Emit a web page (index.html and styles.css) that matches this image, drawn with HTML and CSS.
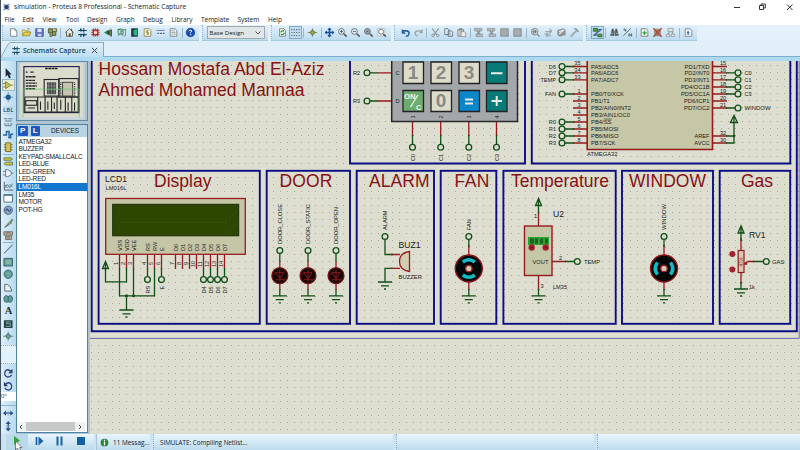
FILE: index.html
```html
<!DOCTYPE html>
<html lang="en">
<head>
<meta charset="utf-8">
<title>simulation - Proteus 8 Professional - Schematic Capture</title>
<link rel="stylesheet" href="styles.css">
</head>
<body>
<svg class="defs" aria-hidden="true">
<defs>
<symbol id="page" viewBox="0 0 12 12"><path d="M2.5 1.5h5l2.500 2.500v6.500h-7.500z" fill="#fff" stroke="#777"/><path d="M7.500 1.500v2.500h2.500" fill="none" stroke="#777" stroke-width=".7"/></symbol>
<symbol id="open" viewBox="0 0 12 12"><path d="M1 10V3h3l1 1h4v2" fill="#f4e58a" stroke="#8b8436" stroke-width=".8"/><path d="M1 10l2.300-4.500H11.500L9.500 10z" fill="#e5cc48" stroke="#8b7c26" stroke-width=".8"/><path d="M7 1.500q2-1 3 1" fill="none" stroke="#555" stroke-width=".8"/></symbol>
<symbol id="save" viewBox="0 0 12 12"><path d="M1.500 1.500h9v9h-9z" fill="#6875bb" stroke="#394891"/><path d="M3.500 1.500h5v4h-5z" fill="#dce2f5"/><path d="M4 7.500h4.500v3H4z" fill="#c6cbe5"/></symbol>
<symbol id="import" viewBox="0 0 12 12"><path d="M1 1.500h5v5H1zM6 4.500h4v5H6z" fill="#939d4a" stroke="#434d32"/><path d="M7 1.500h4v4M3 7l3 3-3 1z" fill="#d4be4a" stroke="#56513a"/></symbol>
<symbol id="home" viewBox="0 0 12 12"><path d="M1 6L6 1.500 11 6M2.500 5.500v5h7v-5M8.500 1.500v3" fill="#eef0e8" stroke="#3d4339"/><path d="M5 7h2.500v3.500H5z" fill="#7c512a"/></symbol>
<symbol id="schem" viewBox="0 0 12 12"><path d="M1 3.500h10M1 8.500h10M4 1v3.500M7.500 1v5M4 7.500v4M7.500 7.500v4" stroke="#184961" stroke-width="1.300"/><path d="M3 2.500h2.500v2H3zM6.500 7.500H9v2H6.500z" fill="#123f5c"/></symbol>
<symbol id="pcb" viewBox="0 0 12 12"><path d="M1 3.500h10M1 6h10M1 8.500h10M3.500 1v10M6 1v10M8.500 1v10" stroke="#a43131"/><path d="M2.500 2.500h7v7h-7z" fill="#ba2a26"/><circle cx="6" cy="6" r="2" fill="#f5ddd3"/></symbol>
<symbol id="view3d" viewBox="0 0 12 12"><path d="M.5 6l5-3v6z" fill="#278e38"/><path d="M5 4l5-2v9L5 8z" fill="#2f4043"/><path d="M8 1v10" stroke="#7eae4b"/></symbol>
<symbol id="gerber" viewBox="0 0 12 12"><path d="M1 3q3-3 8 0l2-1v7l-2 2M2 10l3-4 3 4M2 2v6h6V4z" fill="none" stroke="#3c7d56"/><path d="M4 4h5v2H4z" fill="#79a58b"/></symbol>
<symbol id="explorer" viewBox="0 0 12 12"><path d="M2 1h8v10H2z" fill="#203d3a"/><path d="M5 3l4-1v8L5 9z" fill="#26b78b"/></symbol>
<symbol id="bom" viewBox="0 0 12 12"><path d="M2 1.500h6l2 2v7H2z" fill="#fafae4" stroke="#827d54"/><path d="M7.500 4h-3v2h3v2h-3M6 3v6" fill="none" stroke="#8d7d24" stroke-width=".8"/></symbol>
<symbol id="code" viewBox="0 0 12 12"><path d="M1 2h10v8H1z" fill="#dfeafa"/><path d="M1 3.500h10" stroke="#4d6da7"/><path d="M2 7h2m1 0h3m1 0h2" stroke="#4060b0" stroke-width="1.500"/></symbol>
<symbol id="note" viewBox="0 0 12 12"><path d="M2 1.500h6l2 2v7H2z" fill="#eef1f1" stroke="#718087"/><path d="M3.500 4h4M3.500 6h5M3.500 8h5" stroke="#7d8d94" stroke-width=".8"/></symbol>
<symbol id="help" viewBox="0 0 12 12"><circle cx="6" cy="6" r="5.300" fill="#194eaf" stroke="#12377b" stroke-width=".6"/><path d="M4 4.500Q4.500 2.700 6.500 3 9 3.700 6.200 6v1" fill="none" stroke="#fff" stroke-width="1.200"/><path d="M5.600 8.200H7v1.200H5.600z" fill="#fff"/></symbol>
<symbol id="redraw" viewBox="0 0 12 12"><path d="M2.500 1.500h5l2 2v7h-7z" fill="#fff" stroke="#777"/><path d="M4 6q0-2 3-2M8 6q0 2.500-3 2.500" fill="none" stroke="#319438" stroke-width="1.300"/><path d="M6.500 2.500L8.500 4l-2 1.500zM5.500 7v3L3.500 8.500z" fill="#319438"/></symbol>
<symbol id="grid" viewBox="0 0 12 12"><path d="M1 2.500h10M1 6h10M1 9.500h10" stroke="#52636e" stroke-width="1.300" stroke-dasharray="1.300 1.600"/></symbol>
<symbol id="origin" viewBox="0 0 12 12"><path d="M0 6h12M6 1v10" stroke="#7b8067"/><path d="M6 2.800L9.200 6 6 9.200 2.800 6z" fill="#a1a146" stroke="#4f5736"/></symbol>
<symbol id="pan" viewBox="0 0 12 12"><path d="M1 6h10M6 1v10" stroke="#175295" stroke-width="2"/><path d="M0 6l3-2.500v5zM12 6L9 3.500v5zM6 0l2.500 3h-5zM6 12L3.500 9h5z" fill="#175295"/></symbol>
<symbol id="zoomin" viewBox="0 0 12 12"><circle cx="4.700" cy="4.700" r="3.500" fill="#e5eef4" stroke="#596168"/><path d="M7.500 7.500l3.500 3.500" stroke="#605746" stroke-width="1.900"/><path d="M3 4.700h3.500M4.700 3v3.500" stroke="#405060"/></symbol>
<symbol id="zoomout" viewBox="0 0 12 12"><circle cx="4.700" cy="4.700" r="3.500" fill="#e5eef4" stroke="#596168"/><path d="M7.500 7.500l3.500 3.500" stroke="#605746" stroke-width="1.900"/><path d="M3 4.700h3.500" stroke="#405060"/></symbol>
<symbol id="zoomall" viewBox="0 0 12 12"><circle cx="4.700" cy="4.700" r="3.500" fill="#a7b3bb" stroke="#596168"/><path d="M7.500 7.500l3.500 3.500" stroke="#605746" stroke-width="1.900"/><path d="M3.500 3.500h2.500v2.500H3.500z" fill="#556472"/></symbol>
<symbol id="zoomarea" viewBox="0 0 12 12"><path d="M1 1h9v9H1z" fill="#f4f6f7" stroke="#a3aaa8" stroke-width=".7"/><circle cx="5.500" cy="5" r="3" fill="#fff" stroke="#596168"/><path d="M8 8l3.500 3" stroke="#605746" stroke-width="1.900"/></symbol>
<symbol id="undo" viewBox="0 0 12 12"><path d="M3 4h4q4 0 3 4-.8 2.500-3.500 2.500" fill="none" stroke="#2264a1" stroke-width="2"/><path d="M1.500 1.500v6h5z" fill="#2264a1"/></symbol>
<symbol id="redo" viewBox="0 0 12 12"><path d="M9 4H6Q1.500 4 2 7.500 2.700 10 5 10" fill="none" stroke="#9aa1a3" stroke-width="1.700"/><path d="M11 1.500v5.500H6.500z" fill="#9aa1a3"/></symbol>
<symbol id="cut" viewBox="0 0 12 12"><path d="M2 1l5.500 8M10 1L4 9" stroke="#969a9c" stroke-width="1.500"/><circle cx="3" cy="9.500" r="1.500" fill="none" stroke="#8a8e90"/><circle cx="8.700" cy="9.500" r="1.500" fill="none" stroke="#8a8e90"/></symbol>
<symbol id="copy" viewBox="0 0 12 12"><path d="M1.500 1.500h4l1 1v6h-5zM5.500 4h4l1.500 1.500v5H5.500z" fill="#e9eff3" stroke="#556b7a"/><path d="M7 7h2.500M7 9h2.500" stroke="#556b7a" stroke-width=".6"/></symbol>
<symbol id="paste" viewBox="0 0 12 12"><path d="M1.500 2.500h7v8h-7z" fill="#c6c8c8" stroke="#8a8d8e"/><path d="M3 1h4v2.500H3z" fill="#898c8d"/><path d="M5.500 5h4l1.500 1.500v4.500H5.500z" fill="#efefef" stroke="#8a8d8e"/></symbol>
<symbol id="blockcopy" viewBox="0 0 12 12"><path d="M1 1h9v3H1zM3 8h8v3H3z" fill="#b6bbbd" stroke="#858c8f" stroke-width=".8"/><path d="M4 4l4 4M8 4L4 8" stroke="#858c8f" stroke-width="1.500"/></symbol>
<symbol id="blockfill" viewBox="0 0 12 12"><path d="M1.500 1.500h9v9h-9z" fill="#9fa5a7" stroke="#81888b"/><path d="M2 4h8M2 7h8M4 2v8M7 2v8" stroke="#b4bbbd" stroke-width=".6"/></symbol>
<symbol id="pick" viewBox="0 0 12 12"><circle cx="5" cy="5" r="4" fill="#dde1e2" stroke="#7d8283"/><path d="M8 8l3 3M2 5h6M4 2v6M6 3v4" stroke="#777d7e" stroke-width="1.300"/></symbol>
<symbol id="make" viewBox="0 0 12 12"><path d="M1 8h6l3-5M2 5h8M3 10h6M8 1v6M4 6v5" fill="none" stroke="#979e9f" stroke-width="1.200"/></symbol>
<symbol id="pack" viewBox="0 0 12 12"><path d="M1 3l7-2 3 2v6l-7 2-3-2z" fill="#8d9496"/><path d="M3 5l5-2M3 8l6-5" stroke="#e7eaec" stroke-width="1.300"/></symbol>
<symbol id="hammer" viewBox="0 0 12 12"><path d="M1.500 11L8 4" stroke="#a0a6a7" stroke-width="2"/><path d="M4 1h4l3.500 3.500L10 6 7.500 3z" fill="#8d9394"/></symbol>
<symbol id="autoroute" viewBox="0 0 12 12"><path d="M1 1h5v3.500H1zM6.500 8h5v3.500h-5z" fill="#4fa04a" stroke="#27662d"/><path d="M7 2.500h3L2 9h4" fill="none" stroke="#3c5c93" stroke-width="1.500"/></symbol>
<symbol id="binoc" viewBox="0 0 12 12"><path d="M3 1.500h2l.8 8.500H.8zM7 1.500h2l2.200 8.500H6.200z" fill="#52585b"/><path d="M4.500 4h3v3h-3z" fill="#777d80"/><path d="M2 7h2M8 7h2" stroke="#d5dbdf"/></symbol>
<symbol id="props" viewBox="0 0 12 12"><path d="M1 10L10 1M1 3h4M7 9h4M2 1l2 4M8 7v4M11 7v4" stroke="#576b75" stroke-width="1.200"/></symbol>
<symbol id="newsheet" viewBox="0 0 12 12"><path d="M2 1.500h6l2 2v7H2z" fill="#f4f8f0" stroke="#68766d"/><path d="M3.500 6.500h5M6 4v5" stroke="#2e9d32" stroke-width="1.500"/></symbol>
<symbol id="delsheet" viewBox="0 0 12 12"><path d="M2 1.500h8v9H2z" fill="#9b8b81"/><path d="M1 1l10 10M11 1L1 11" stroke="#b1513a" stroke-width="1.800"/></symbol>
<symbol id="goto" viewBox="0 0 12 12"><path d="M3 1h6v4H3zM1 8h4v3H1zM7 8h4v3H7z" fill="#e2e5e6" stroke="#92999c"/><path d="M5 5L3 8M8 5l1 3" stroke="#7d878b"/></symbol>
<symbol id="exit" viewBox="0 0 12 12"><path d="M2 1.500h6l2 2v7H2z" fill="#f4f8fb" stroke="#6f7d86"/><path d="M4 6h3M5.500 4v5" stroke="#3a74ad" stroke-width="1.500"/></symbol>
<symbol id="cursor" viewBox="0 0 12 12"><path d="M3 0v10l2.300-2L7 12l2-1-1.700-3.500H10z" fill="#1d2a38"/></symbol>
<symbol id="comp" viewBox="0 0 12 12"><path d="M3 2l6 4-6 4z" fill="#d2c552" stroke="#7c782c"/><path d="M0 4h3M0 8h3M9 6h3" stroke="#7c782c"/></symbol>
<symbol id="dot" viewBox="0 0 12 12"><path d="M0 6h12M6 0v12" stroke="#6f94ad"/><circle cx="6" cy="6" r="3" fill="#1f5a91"/></symbol>
<symbol id="lbl" viewBox="0 0 12 12"><path d="M0 2.500h12M0 10h12" stroke="#8fb5cd" stroke-width=".6"/><text x="0" y="8.500" font-size="6.500" font-weight="bold" textLength="12" lengthAdjust="spacingAndGlyphs" fill="#30688f">LBL</text></symbol>
<symbol id="script" viewBox="0 0 12 12"><path d="M1 2h4m1 0h5M2 4.500h8M1 8h3m1 0h2m1 0h3M2 10h8" stroke="#657c8c" stroke-width="1.200"/></symbol>
<symbol id="bus" viewBox="0 0 12 12"><path d="M0 7h4V3h3v7h2V6h3" fill="none" stroke="#2a67a0" stroke-width="1.700"/></symbol>
<symbol id="sub" viewBox="0 0 12 12"><path d="M3 1h6v10H3z" fill="#d4c24a" stroke="#6f6a2b"/><path d="M1 3h2M1 6h2M1 9h2M9 3h2M9 6h2M9 9h2" stroke="#6f6a2b"/></symbol>
<symbol id="term" viewBox="0 0 12 12"><path d="M1 2h8l2 1.500L9 5H1zM3 7h8v3.500H3L1 9z" fill="#c8c04a" stroke="#4c6d48" stroke-width=".8"/></symbol>
<symbol id="gate" viewBox="0 0 12 12"><path d="M3 2h2q5 1 5 4 0 3-5 4H3z" fill="#eef4f8" stroke="#5d707c"/><path d="M0 4h3M0 8h3M10 6h2" stroke="#5d707c"/></symbol>
<symbol id="graph" viewBox="0 0 12 12"><path d="M1.500 1v9.500H12" fill="none" stroke="#547"/><path d="M2 8l3-4 3 4 3-5" fill="none" stroke="#328377"/><path d="M2 4l3 4 3-4 3 3" fill="none" stroke="#7e8790"/></symbol>
<symbol id="window" viewBox="0 0 12 12"><path d="M1 2h10v8.500H1z" fill="#fff" stroke="#456781"/><path d="M1 2.500h10" stroke="#456781" stroke-width="1.500"/></symbol>
<symbol id="gen" viewBox="0 0 12 12"><circle cx="6" cy="6" r="4.800" fill="#8aa5bc" stroke="#455b78"/><path d="M3 7q1.500-4 3-1t3-1" fill="none" stroke="#294585" stroke-width="1.200"/></symbol>
<symbol id="probe" viewBox="0 0 12 12"><path d="M2 11L8 4l2 1.500z" fill="#bfbd74" stroke="#566"/><path d="M8 4l2-3 2 1-2 3.500" fill="#7a886b"/></symbol>
<symbol id="meter" viewBox="0 0 12 12"><path d="M1 2h10v4H1zM3 7h7v4H3z" fill="#b7b6a7" stroke="#616862"/><path d="M3 4l3-1 3 1M4 9h4" stroke="#87533f" fill="none"/></symbol>
<symbol id="line" viewBox="0 0 12 12"><path d="M1 11L11 1" stroke="#263a4b"/></symbol>
<symbol id="rect" viewBox="0 0 12 12"><path d="M1 1.500h10v9H1z" fill="#5f9a99" stroke="#32616c"/><path d="M3 3.500h6v5H3z" fill="#85b7a5"/></symbol>
<symbol id="circle" viewBox="0 0 12 12"><circle cx="6" cy="6" r="4.800" fill="#5e9d95" stroke="#32616c"/><path d="M3 5h6M4 8h4" stroke="#89b8a8"/></symbol>
<symbol id="arc" viewBox="0 0 12 12"><path d="M2 2.500q7 0 8 8H2z" fill="#e9f1f4" stroke="#465c6b"/></symbol>
<symbol id="path" viewBox="0 0 12 12"><path d="M6 3Q2 0 1 5q0 6 5 4 5 2 5-4-1-5-5-2z" fill="#5e9d95" stroke="#32616c"/><path d="M6 3v6" stroke="#32616c"/></symbol>
<symbol id="sym" viewBox="0 0 12 12"><path d="M1 1.500h10v9H1z" fill="#274648"/><path d="M9 3.500H4v2h4.500v3H3" fill="none" stroke="#87afa9"/></symbol>
<symbol id="mark" viewBox="0 0 12 12"><path d="M0 6h12M6 1v10" stroke="#537a7b"/><circle cx="6" cy="6" r="2.500" fill="#78a396" stroke="#3d6767"/></symbol>
<symbol id="rot" viewBox="0 0 12 12"><path d="M9.500 4Q5 0 2.500 4q-2 5 3 6.500 3 0 4.500-2.500" fill="none" stroke="#273f76" stroke-width="1.500"/><path d="M11 1v5H6z" fill="#273f76"/></symbol>
<symbol id="fliph" viewBox="0 0 12 12"><path d="M0 6l3.500-3v6zM12 6L8.500 3v6z" fill="#2a4d91"/><path d="M2 6h8" stroke="#2a4d91" stroke-width="1.500"/><path d="M6 3v6" stroke="#8aa4c5"/></symbol>

<g id="gnd"><path class="wire" d="M-7 0H7M-4 3.800H4M-1 7H1"/></g>
<g id="vcc"><path class="wire" d="M0 0V6M0-1L-3 6H3zM0 2V6"/></g>
<g id="led"><path class="pin" d="M0-14V14"/><circle r="8" fill="#160606" stroke="#7d1718" stroke-width="1.200"/><path d="M-4-3H4L0 3zM-4 4H4M-6-1l3-3M3 5l3-2M0-6V6" fill="none" stroke="#84191b"/></g>
<g id="motor"><circle r="13.500" fill="#050809" stroke="#8a1518" stroke-width="1.400"/><path d="M-6-6.500Q0-11 6-6.500M-6 6.500Q0 11 6 6.500" fill="none" stroke="#17b9c4" stroke-width="3.600"/><circle r="3.200" fill="#d6c9b5" stroke="#a02726" stroke-width="1.300"/></g>
</defs>
</svg>

<div class="app">
  <header class="titlebar">
    <svg class="logo" viewBox="0 0 12 12"><rect width="12" height="12" fill="#dce3ee"/><circle cx="6" cy="6" r="4" fill="#24427d"/><path d="M1 2h3M8 2h3M1 10h3M8 10h3" stroke="#495a79"/></svg>
    <span class="title">simulation - Proteus 8 Professional - Schematic Capture</span>
    <svg class="winctl" viewBox="0 0 70 12"><path d="M5 6.500h6M30.500 4.500h4v4h-4zM32 4.500V3h4.300v4H35M58 3.500l5.500 5.500M63.500 3.500L58 9" fill="none" stroke="#333" stroke-width="1"/></svg>
  </header>
  <nav class="menu"><span>File</span><span>Edit</span><span>View</span><span>Tool</span><span>Design</span><span>Graph</span><span>Debug</span><span>Library</span><span>Template</span><span>System</span><span>Help</span></nav>

  <div class="toolbars">
    <div class="group g1"><svg><use href="#page"/></svg><svg><use href="#open"/></svg><svg><use href="#save"/></svg><svg><use href="#import"/></svg><i></i><svg><use href="#home"/></svg><svg><use href="#schem"/></svg><svg><use href="#pcb"/></svg><svg><use href="#view3d"/></svg><svg><use href="#gerber"/></svg><svg><use href="#explorer"/></svg><svg><use href="#bom"/></svg><svg><use href="#code"/></svg><svg><use href="#note"/></svg><i></i><svg><use href="#help"/></svg></div>
    <div class="group g2"><div class="combo"><span>Base Design</span><svg viewBox="0 0 6 4"><path d="M.5.500L3 3 5.500.5" fill="none" stroke="#555"/></svg></div></div>
    <div class="group g3"><svg><use href="#redraw"/></svg><svg class="on"><use href="#grid"/></svg><i></i><svg><use href="#origin"/></svg><i></i><svg><use href="#pan"/></svg><svg><use href="#zoomin"/></svg><svg><use href="#zoomout"/></svg><svg><use href="#zoomall"/></svg><svg><use href="#zoomarea"/></svg></div>
    <div class="group g4"><svg><use href="#undo"/></svg><svg><use href="#redo"/></svg><i></i><svg><use href="#cut"/></svg><svg><use href="#copy"/></svg><svg><use href="#paste"/></svg><i></i><svg><use href="#blockcopy"/></svg><svg><use href="#blockcopy"/></svg><svg><use href="#blockfill"/></svg><svg><use href="#blockfill"/></svg><i></i><svg><use href="#pick"/></svg><svg><use href="#make"/></svg><svg><use href="#pack"/></svg><svg><use href="#hammer"/></svg></div>
    <div class="group g5"><svg class="on"><use href="#autoroute"/></svg><i></i><svg><use href="#binoc"/></svg><svg><use href="#props"/></svg><i></i><svg><use href="#newsheet"/></svg><svg><use href="#delsheet"/></svg><svg><use href="#goto"/></svg><i></i><svg><use href="#exit"/></svg></div>
  </div>

  <div class="tabs">
    <svg class="tabslope" viewBox="0 0 11 15" preserveAspectRatio="none"><path d="M0 15L8 2Q9 .5 11 .5V15z" fill="#cfe6f5"/><path d="M0 15L8 2Q9 .5 11 .5" fill="none" stroke="#83a9c2"/></svg>
    <div class="tab"><svg class="tabicon"><use href="#schem"/></svg><span>Schematic Capture</span><svg class="close" viewBox="0 0 8 8"><path d="M1 1l6 6M7 1L1 7" stroke="#3c4650" stroke-width="1.100"/></svg></div>
  </div>

  <main class="work">
    <aside class="tools">
      <svg><use href="#cursor"/></svg><svg class="on"><use href="#comp"/></svg><svg><use href="#dot"/></svg><svg><use href="#lbl"/></svg><svg><use href="#script"/></svg><svg><use href="#bus"/></svg><svg><use href="#sub"/></svg><hr><svg><use href="#term"/></svg><svg><use href="#gate"/></svg><svg><use href="#graph"/></svg><svg><use href="#window"/></svg><svg><use href="#gen"/></svg><svg><use href="#probe"/></svg><svg><use href="#meter"/></svg><hr><svg><use href="#line"/></svg><svg><use href="#rect"/></svg><svg><use href="#circle"/></svg><svg><use href="#arc"/></svg><svg><use href="#path"/></svg><b>A</b><svg><use href="#sym"/></svg><svg><use href="#mark"/></svg>
      <div class="toolgap"></div>
      <svg><use href="#rot"/></svg><svg class="ccw"><use href="#rot"/></svg><div class="angle">0°</div><hr class="wide"><svg><use href="#fliph"/></svg><svg class="vert"><use href="#fliph"/></svg>
    </aside>

    <section class="side">
      <svg class="overview" viewBox="0 0 71 63">
        <rect width="71" height="63" fill="#c5d4dc"/><rect x="1" y="1.500" width="68" height="58.500" fill="#dcdccd"/>
        <rect x="5" y="5" width="60" height="50" fill="none" stroke="#191953" stroke-width="1.200"/>
        <g fill="none" stroke="#24262a" stroke-width="1.200"><path d="M6 38h58M6 54.500h58M6 38v17M20 38v17M28 38v17M35 38v17M41 38v17M50 38v17M57 38v17M64 38v17"/><rect x="27" y="19" width="16" height="18"/><rect x="43" y="18" width="21" height="20"/><rect x="7" y="42" width="12" height="5"/><path d="M9 50h8M23 43v9M31 43v9M38 44v7M45 41v11M53 44v9M60 44v9"/></g>
        <rect x="30" y="22" width="10" height="13" fill="#4b4e50"/><path d="M32 22v13M35 22v13M38 22v13M30 26h10M30 30h10" stroke="#9ba09b" stroke-width=".6"/><rect x="47" y="22" width="11" height="15" fill="#c5c5af" stroke="#333"/><path d="M45 22v15M60 22v15" stroke="#333" stroke-width="1.500" stroke-dasharray="1 1"/>
        <path d="M28 7h14M7 11h2m3 0h4M7 16h11M7 20h10M7 23h12M7 26h12M7 29h10" stroke="#222" stroke-width="1.500" stroke-dasharray="3 .5"/>
        <path d="M4 29.500h61M4 60V29.500M65 60V29.500" fill="none" stroke="#65c66e" stroke-width=".8"/>
      </svg>
      <div class="devices">
        <div class="devhead"><b>P</b><b>L</b><span>DEVICES</span></div>
        <ul><li>ATMEGA32</li><li>BUZZER</li><li>KEYPAD-SMALLCALC</li><li>LED-BLUE</li><li>LED-GREEN</li><li>LED-RED</li><li class="sel">LM016L</li><li>LM35</li><li>MOTOR</li><li>POT-HG</li></ul>
        <div class="scroll"><svg viewBox="0 0 4 6"><path d="M3 1L1 3l2 2" fill="none" stroke="#444"/></svg><div></div><svg viewBox="0 0 4 6"><path d="M1 1l2 2-2 2" fill="none" stroke="#444"/></svg></div>
      </div>
    </section>

    <svg class="canvas" viewBox="90 61 710 373">
      <defs><pattern id="dots" x="105" y="65" width="7" height="7" patternUnits="userSpaceOnUse"><rect width="1" height="1" fill="#a6a897"/></pattern></defs>
      <rect x="90" y="61" width="710" height="373" fill="#dddecf"/>
      <rect x="90" y="61" width="710" height="373" fill="url(#dots)"/>
      <g fill="none" stroke="#0d0d83" stroke-width="1.900">
        <path d="M91.700 61V331.200H796.800V61"/>
        <path d="M350 61V163.500H525V61M531.800 61V163.500H790.300V61"/>
        <rect x="98.600" y="170.800" width="161.200" height="153"/><rect x="266.700" y="170.800" width="83.300" height="153"/><rect x="356.700" y="170.800" width="77.300" height="153"/><rect x="440.700" y="170.800" width="55.600" height="153"/><rect x="503.400" y="170.800" width="112.300" height="153"/><rect x="622" y="170.800" width="91" height="153"/><rect x="719.700" y="170.800" width="70.500" height="153"/>
      </g>
      <path d="M90 338.400H799.200V61" fill="none" stroke="#6d6daf" stroke-width="1"/>

      <g class="names"><text x="98.500" y="75" textLength="226">Hossam Mostafa Abd El-Aziz</text><text x="98.500" y="95.500" textLength="206">Ahmed Mohamed Mannaa</text>
      <text x="154" y="187" textLength="57.500">Display</text><text x="279.500" y="187" textLength="53">DOOR</text><text x="369" y="187" textLength="60.500">ALARM</text><text x="454.500" y="187" textLength="35">FAN</text><text x="511" y="187" textLength="98">Temperature</text><text x="629" y="187" textLength="77">WINDOW</text><text x="741" y="187" textLength="32">Gas</text></g>

      <!-- keypad -->
      <path d="M391.700 61H517.500V121.500H391.700z" fill="#a3a7a9"/><path d="M391.700 61V121.500H517.500V61" fill="none" stroke="#27292c" stroke-width="1.500"/>
      <g stroke="#222" stroke-width="1.300"><path d="M403 62h20.500v21.500H403zM431 62h20.500v21.500H431zM459 62h20.500v21.500H459zM431 90.500h20.500v21H431z" fill="#dddccb"/><path d="M486.500 62H507v21.500h-20.500zM486.500 90.500H507v21h-20.500z" fill="#087b79"/><path d="M403 90.500h20.500v21H403z" fill="#6dac70"/><path d="M459 90.500h20.500v21H459z" fill="#0a87cb"/></g>
      <g class="keys"><text x="413" y="78.500">1</text><text x="441" y="78.500">2</text><text x="469" y="78.500">3</text><text x="441" y="106.500">0</text></g>
      <path d="M491 73.200h11.500M491.500 101h10.500M496.700 96v10M465 99.500h8M465 103.500h8" stroke="#ebece4" stroke-width="2"/>
      <path d="M410.500 107L418 95" stroke="#f4f4e8" stroke-width="1.300"/><text class="on-c" x="404" y="99" textLength="11.500" lengthAdjust="spacingAndGlyphs">ON</text><text class="on-c" x="416" y="110">C</text>
      <path class="pin" d="M378 72.800H391M378 101H391M412.500 122v14M440.700 122v14M468.800 122v14M496.500 122v14"/>
      <path class="wire" d="M370 72.800H378M370 101H378M412.500 135v9M440.700 135v9M468.800 135v9M496.500 135v9"/>
      <g class="term"><circle cx="367" cy="72.800" r="2.900"/><circle cx="367" cy="101" r="2.900"/><circle cx="412.500" cy="147.300" r="2.900"/><circle cx="440.700" cy="147.300" r="2.900"/><circle cx="468.800" cy="147.300" r="2.900"/><circle cx="496.500" cy="147.300" r="2.900"/></g>
      <g class="lab"><text x="353" y="75">R2</text><text x="353" y="103.200">R3</text><text x="395.500" y="75">C</text><text x="395.500" y="103.200">D</text>
      <text transform="translate(414.500 118.500) rotate(-90)">1</text><text transform="translate(442.700 118.500) rotate(-90)">2</text><text transform="translate(470.700 118.500) rotate(-90)">3</text><text transform="translate(498.500 118.500) rotate(-90)">4</text>
      <text transform="translate(414.800 161) rotate(-90)">C0</text><text transform="translate(442.900 161) rotate(-90)">C1</text><text transform="translate(471 161) rotate(-90)">C2</text><text transform="translate(498.900 161) rotate(-90)">C3</text></g>

      <!-- microcontroller -->
      <path d="M587.200 61H712.500V149.500H587.200z" fill="#c6c7a6"/><path d="M587.200 61V149.500H712.500V61" fill="none" stroke="#951a1d" stroke-width="1.600"/>
      <path class="pin" d="M573 66.500H587M573 72.800H587M573 79.800H587M573 94H587M573 101H587M573 108H587M573 115H587M573 122H587M573 129H587M573 136H587M573 143H587M713 66.500H727M713 72.800H727M713 79.800H727M713 87H727M713 94H727M713 101H727M713 108H727M713 136H727M713 143H727"/>
      <path class="wire" d="M565 66.500H574M565 72.800H574M565 79.800H574M565 94H574M565 122H574M565 129H574M565 136H574M565 143H574M726 72.800H735M726 79.800H735M726 87H735M726 94H735M726 108H735M726 136H734M726 143H734V116M730.500 122.500L734 115.500 737.500 122.500z"/><circle cx="734" cy="136" r="1.300" fill="#114f18"/>
      <g class="term"><circle cx="562" cy="66.500" r="2.900"/><circle cx="562" cy="72.800" r="2.900"/><circle cx="562" cy="79.800" r="2.900"/><circle cx="562" cy="94" r="2.900"/><circle cx="562" cy="122" r="2.900"/><circle cx="562" cy="129" r="2.900"/><circle cx="562" cy="136" r="2.900"/><circle cx="562" cy="143" r="2.900"/><circle cx="738" cy="72.800" r="2.900"/><circle cx="738" cy="79.800" r="2.900"/><circle cx="738" cy="87" r="2.900"/><circle cx="738" cy="94" r="2.900"/><circle cx="738" cy="108" r="2.900"/></g>
      <g class="lab end"><text x="556" y="68.500">D6</text><text x="556" y="75.200">D7</text><text x="556" y="82.200">TEMP</text><text x="556" y="96.400">FAN</text><text x="556" y="124.400">R0</text><text x="556" y="131.400">R1</text><text x="556" y="138.400">R2</text><text x="556" y="145.400">R3</text>
      <text x="580.500" y="65">35</text><text x="580.500" y="71.500">34</text><text x="580.500" y="78.500">33</text><text x="580.500" y="92.500">1</text><text x="580.500" y="99.500">2</text><text x="580.500" y="106.500">3</text><text x="580.500" y="113.500">4</text><text x="580.500" y="120.500">5</text><text x="580.500" y="127.500">6</text><text x="580.500" y="134.500">7</text><text x="580.500" y="141.500">8</text>
      <text x="709.500" y="68.700" textLength="25" lengthAdjust="spacingAndGlyphs">PD1/TXD</text><text x="709.500" y="75" textLength="25" lengthAdjust="spacingAndGlyphs">PD2/INT0</text><text x="709.500" y="82" textLength="25" lengthAdjust="spacingAndGlyphs">PD3/INT1</text><text x="709.500" y="89.200" textLength="28.500" lengthAdjust="spacingAndGlyphs">PD4/OC1B</text><text x="709.500" y="96.200" textLength="28.500" lengthAdjust="spacingAndGlyphs">PD5/OC1A</text><text x="709.500" y="103.200" textLength="25.500" lengthAdjust="spacingAndGlyphs">PD6/ICP1</text><text x="709.500" y="110.200" textLength="25.500" lengthAdjust="spacingAndGlyphs">PD7/OC2</text><text x="709.500" y="138.200">AREF</text><text x="709.500" y="145.200">AVCC</text></g>
      <g class="lab"><text x="591" y="68.700" textLength="27.500" lengthAdjust="spacingAndGlyphs">PA5/ADC5</text><text x="591" y="75" textLength="27.500" lengthAdjust="spacingAndGlyphs">PA6/ADC6</text><text x="591" y="82" textLength="27.500" lengthAdjust="spacingAndGlyphs">PA7/ADC7</text><text x="591" y="96.200" textLength="33" lengthAdjust="spacingAndGlyphs">PB0/T0/XCK</text><text x="591" y="103.200">PB1/T1</text><text x="591" y="110.200" textLength="40" lengthAdjust="spacingAndGlyphs">PB2/AIN0/INT2</text><text x="591" y="117.200" textLength="39" lengthAdjust="spacingAndGlyphs">PB3/AIN1/OC0</text><text x="591" y="124.200" textLength="20.500" lengthAdjust="spacingAndGlyphs">PB4/SS</text><text x="591" y="131.200" textLength="27.500" lengthAdjust="spacingAndGlyphs">PB5/MOSI</text><text x="591" y="138.200" textLength="27.500" lengthAdjust="spacingAndGlyphs">PB6/MISO</text><text x="591" y="145.200" textLength="24.500" lengthAdjust="spacingAndGlyphs">PB7/SCK</text><text x="587" y="156" textLength="30.500" lengthAdjust="spacingAndGlyphs">ATMEGA32</text>
      <text x="720" y="65">15</text><text x="720" y="71.500">16</text><text x="720" y="78.500">17</text><text x="720" y="85.700">18</text><text x="720" y="92.700">19</text><text x="720" y="99.700">20</text><text x="720" y="106.700">21</text><text x="720" y="134.700">32</text><text x="720" y="141.700">30</text><text x="744.500" y="75">C0</text><text x="744.500" y="82">C1</text><text x="744.500" y="89.200">C2</text><text x="744.500" y="96.200">C3</text><text x="744.500" y="110.200" textLength="26" lengthAdjust="spacingAndGlyphs">WINDOW</text></g>
      <path d="M604 119h7.500" stroke="#333" stroke-width=".6"/>

      <!-- LCD -->
      <rect x="105.700" y="198.500" width="139.600" height="55.800" fill="#c5c6a5" stroke="#9b1c20" stroke-width="1.300"/><rect x="112.700" y="204.300" width="126" height="31.500" fill="#2d4700" stroke="#172b0b" stroke-width="1"/><path d="M117 222.500H227M226 220l12-9M226 232l12-8" stroke="#48631a" stroke-width=".8" stroke-dasharray="1 3"/>
      <text class="ref" x="105" y="181.500" textLength="22" lengthAdjust="spacingAndGlyphs">LCD1</text><text class="lab" x="105.500" y="190" textLength="21" lengthAdjust="spacingAndGlyphs">LM016L</text>
      <path class="pin" d="M119.500 255v14M126.500 255v14M133.500 255v14M147.500 255v14M154.500 255v14M161.500 255v14M175.500 255v14M182.500 255v14M189.500 255v14M196.500 255v14M203.500 255v14M210.500 255v14M217.500 255v14M224.500 255v14"/>
      <path class="wire" d="M119.500 268V295.800H154.500V268M133.500 268V295.800M126.500 268V281.800H105.500V267M126.500 295.800V310M147.500 268v8M161.500 268v8M203.500 268v8M210.500 268v8M217.500 268v8M224.500 268v8"/>
      <circle cx="126.500" cy="295.800" r="1.500" fill="#114f18"/><circle cx="133.500" cy="295.800" r="1.500" fill="#114f18"/>
      <use href="#vcc" x="105.500" y="262.500"/><use href="#gnd" x="126.500" y="310"/>
      <g class="term"><circle cx="147.500" cy="279.600" r="2.900"/><circle cx="161.500" cy="279.600" r="2.900"/><circle cx="203.500" cy="279.600" r="2.900"/><circle cx="210.500" cy="279.600" r="2.900"/><circle cx="217.500" cy="279.600" r="2.900"/><circle cx="224.500" cy="279.600" r="2.900"/></g>
      <g class="lab"><text transform="translate(121.700 251) rotate(-90)">VSS</text><text transform="translate(128.700 251) rotate(-90)">VDD</text><text transform="translate(135.700 251) rotate(-90)">VEE</text><text transform="translate(149.700 251) rotate(-90)">RS</text><text transform="translate(156.700 251) rotate(-90)">RW</text><text transform="translate(163.700 251) rotate(-90)">E</text><text transform="translate(177.700 251) rotate(-90)">D0</text><text transform="translate(184.700 251) rotate(-90)">D1</text><text transform="translate(191.700 251) rotate(-90)">D2</text><text transform="translate(198.700 251) rotate(-90)">D3</text><text transform="translate(205.700 251) rotate(-90)">D4</text><text transform="translate(212.700 251) rotate(-90)">D5</text><text transform="translate(219.700 251) rotate(-90)">D6</text><text transform="translate(226.700 251) rotate(-90)">D7</text>
      <text transform="translate(118.300 265) rotate(-90)">1</text><text transform="translate(125.300 265) rotate(-90)">2</text><text transform="translate(132.300 265) rotate(-90)">3</text><text transform="translate(146.300 265) rotate(-90)">4</text><text transform="translate(153.300 265) rotate(-90)">5</text><text transform="translate(160.300 265) rotate(-90)">6</text><text transform="translate(174.300 265) rotate(-90)">7</text><text transform="translate(181.300 265) rotate(-90)">8</text><text transform="translate(188.300 265) rotate(-90)">9</text><text transform="translate(195.300 267) rotate(-90)">10</text><text transform="translate(202.300 267) rotate(-90)">11</text><text transform="translate(209.300 267) rotate(-90)">12</text><text transform="translate(216.300 267) rotate(-90)">13</text><text transform="translate(223.300 267) rotate(-90)">14</text>
      <text transform="translate(149.700 293.500) rotate(-90)">RS</text><text transform="translate(163.700 289.500) rotate(-90)">E</text><text transform="translate(205.700 293.500) rotate(-90)">D4</text><text transform="translate(212.700 293.500) rotate(-90)">D5</text><text transform="translate(219.700 293.500) rotate(-90)">D6</text><text transform="translate(226.700 293.500) rotate(-90)">D7</text></g>

      <!-- door -->
      <path class="wire" d="M279.800 253.500V262M308 253.500V262M336 253.500V262M279.800 289v7M308 289v7M336 289v7"/>
      <use href="#led" x="279.800" y="275.700"/><use href="#led" x="308" y="275.700"/><use href="#led" x="336" y="275.700"/><use href="#gnd" x="279.800" y="295.800"/><use href="#gnd" x="308" y="295.800"/><use href="#gnd" x="336" y="295.800"/>
      <g class="term"><circle cx="279.800" cy="250.500" r="2.900"/><circle cx="308" cy="250.500" r="2.900"/><circle cx="336" cy="250.500" r="2.900"/></g>
      <g class="lab"><text textLength="40" lengthAdjust="spacingAndGlyphs" transform="translate(282 244) rotate(-90)">DOOR_CLOSE</text><text textLength="40" lengthAdjust="spacingAndGlyphs" transform="translate(310.200 244) rotate(-90)">DOOR_STATIC</text><text textLength="37" lengthAdjust="spacingAndGlyphs" transform="translate(338.200 244) rotate(-90)">DOOR_OPEN</text></g>

      <!-- alarm -->
      <path class="wire" d="M385 239.500V254.500H393M385 282V268.300H393"/><path class="pin" d="M391 254.500h9M391 268.300h9"/>
      <path d="M409.500 251.500V271.500Q399.500 270 399.500 261.500T409.500 251.500z" fill="#cfceb2" stroke="#991b1e" stroke-width="1.300"/>
      <use href="#gnd" x="385" y="282"/><g class="term"><circle cx="385" cy="236.500" r="2.900"/></g><text class="ref" x="398.500" y="248" textLength="22" lengthAdjust="spacingAndGlyphs">BUZ1</text><text class="lab" x="398.500" y="278.500" textLength="23.500" lengthAdjust="spacingAndGlyphs">BUZZER</text><text class="lab" textLength="19.500" lengthAdjust="spacingAndGlyphs" transform="translate(387.200 230) rotate(-90)">ALARM</text>

      <!-- fan and window -->
      <path class="pin" d="M468.800 245v45M664 245v45"/><path class="wire" d="M468.800 239.500V247M664 239.500V247M468.800 289v7M664 289v7"/>
      <use href="#motor" x="468.800" y="268.500"/><use href="#motor" transform="translate(664 268.500) rotate(90)"/>
      <use href="#gnd" x="468.800" y="295.800"/><use href="#gnd" x="664" y="295.800"/><g class="term"><circle cx="468.800" cy="236.500" r="2.900"/><circle cx="664" cy="236.500" r="2.900"/></g>
      <text class="lab" transform="translate(471 230) rotate(-90)">FAN</text><text class="lab" textLength="26" lengthAdjust="spacingAndGlyphs" transform="translate(666.200 230) rotate(-90)">WINDOW</text>

      <!-- temperature -->
      <path class="pin" d="M538.500 212V226M538.500 276V290M552 261.500H566"/><path class="wire" d="M538.500 204V213M538.500 289V296M565 261.500H574"/>
      <rect x="524.500" y="226" width="27.500" height="49.500" fill="#c6c7a6" stroke="#971b1e" stroke-width="1.400"/><rect x="528" y="237" width="21" height="8" fill="#2ba331"/><path d="M530 238.500h4v5h-4zM535 238.500h3v5h-3zM540 238.500h3v5h-3zM545 238.500h3v5h-3z" fill="#1b4c21" opacity=".75"/><circle cx="531.700" cy="247.500" r="3.200" fill="#a5222a"/><circle cx="545.700" cy="247.500" r="3.200" fill="#a5222a"/><path d="M531.700 246v3M545.700 246v3M530.500 247.500h2.500M544.500 247.500h2.500" stroke="#5d1519" stroke-width=".8"/>
      <use href="#vcc" x="538.500" y="199.500"/><use href="#gnd" x="538.500" y="295.800"/><g class="term"><circle cx="577.300" cy="261.500" r="2.900"/></g>
      <text class="ref" x="553" y="217" textLength="11" lengthAdjust="spacingAndGlyphs">U2</text><g class="lab"><text x="532.500" y="263.800" textLength="16" lengthAdjust="spacingAndGlyphs">VOUT</text><text x="534" y="218">1</text><text x="559" y="260">2</text><text x="540.500" y="287.800">3</text><text x="553" y="288.800" textLength="14" lengthAdjust="spacingAndGlyphs">LM35</text><text x="584" y="264" textLength="16" lengthAdjust="spacingAndGlyphs">TEMP</text></g>

      <!-- gas -->
      <path class="pin" d="M741 238V250M741 273V284M754 261.500H748L744 264"/><path class="wire" d="M741 232V241M741 282V289M753 261.500H763"/><path d="M744 265l2.500-3.500 1 3z" fill="#951a1d"/><rect x="738.200" y="250.500" width="5.800" height="22" fill="#d7cbb4" stroke="#941b1e" stroke-width="1.200"/><text class="pot" transform="translate(742.700 266.500) rotate(-90)">47%</text><circle cx="732.300" cy="254" r="3" fill="#a5222a"/><circle cx="732.300" cy="269.500" r="3" fill="#a5222a"/>
      <use href="#vcc" x="741" y="227"/><use href="#gnd" x="741" y="289"/><g class="term"><circle cx="766.300" cy="261.500" r="2.900"/></g><text class="ref" x="749" y="238" textLength="16.500" lengthAdjust="spacingAndGlyphs">RV1</text><text class="lab" x="749" y="288.800">1k</text><text class="lab" x="772" y="264" textLength="12.500" lengthAdjust="spacingAndGlyphs">GAS</text>
    </svg>
  </main>

  <footer class="status">
    <div class="sim"><div class="btn active"><svg viewBox="0 0 28 14"><path d="M14 2v9l6-4.500z" fill="#2fa63b"/><path d="M15.500 7v9l2-2 1.500 3h2l-1.500-3.500H22z" fill="#fff" stroke="#555" stroke-width=".7"/></svg></div><div class="btn"><svg viewBox="0 0 21 14"><path d="M8.500 3v8" stroke="#1762ac" stroke-width="1.700"/><path d="M10.500 2.500v9L15.500 7z" fill="#1762ac"/></svg></div><div class="btn"><svg viewBox="0 0 21 14"><path d="M8.500 2.500v9M12.500 2.500v9" stroke="#1762ac" stroke-width="2"/></svg></div><div class="btn"><svg viewBox="0 0 21 14"><path d="M7 3h8v8H7z" fill="#155fa9"/></svg></div></div>
    <div class="msg"><svg viewBox="0 0 10 10"><circle cx="5" cy="5" r="4.300" fill="#238630"/><path d="M5 4v4M5 2v1.200" stroke="#fff" stroke-width="1.500"/></svg><span>11 Messag...</span></div>
    <div class="log">SIMULATE: Compiling Netlist...</div><div class="rest"></div><div class="coords"></div>
  </footer>
</div>
</body>
</html>
```
FILE: styles.css
```css
* { box-sizing: border-box; }
body { margin: 0; width: 800px; height: 450px; overflow: hidden; background: #e5f1fa; color: #17191c; font: 6.6px "Open Sans", "Noto Sans", sans-serif; }
.defs { display: none; }
svg { display: block; flex: none; }
.app { display: flex; flex-direction: column; width: 800px; height: 450px; border-left: 1px solid #43535f; }
.titlebar { display: flex; align-items: center; height: 13px; background: #fff; padding-left: 2px; }
.logo { width: 7px; height: 8px; }
.title { margin-left: 4px; font-size: 6.68px; white-space: nowrap; }
.winctl { width: 70px; height: 12px; margin-left: auto; margin-right: 1px; }
.menu { display: grid; grid-template-columns: 18px 20px 23.5px 21px 29px 27px 28.5px 29.5px 36.5px 30.5px 30px; height: 12px; align-items: center; background: #fff; padding-left: 3.5px; font-size: 6.5px; letter-spacing: -.05px; }

.toolbars { display: flex; gap: 3px; height: 16px; padding-left: 1px; }
.group { display: flex; align-items: center; padding-left: 3.5px; background: linear-gradient(#e3f1fc, #bddcf0); border-bottom: 1px solid #a6cbe1; border-left: 1px dotted #94b4c9; }
.group > svg { width: 13px; height: 13px; padding: 1.5px; overflow: visible; }
.group > svg use { width: 10px; height: 10px; }
.group > i { width: 1px; height: 10px; margin: 0 1.7px; background: #9bb8ca; flex: none; }
.group > .on { background: #c2dcef; outline: 1px solid #82a9c5; outline-offset: -1px; }
.g1 { width: 197px; } .g2 { width: 66px; } .g3 { width: 120px; } .g4 { width: 189px; } .g5 { width: 111px; }
.combo { display: flex; align-items: center; justify-content: space-between; width: 58px; height: 13px; border: 1px solid #a1a9ae; background: #e0e5e8; padding: 0 3px 0 2px; font-size: 6.1px; white-space: nowrap; }
.combo svg { width: 6px; height: 4px; }

.tabs { display: flex; align-items: flex-end; height: 20px; background: #e1eff8; border-bottom: 4px solid #addaf0; box-shadow: inset 0 -1px #7fb0cb; }
.tabslope { width: 10px; height: 15px; }
.tab { display: flex; align-items: center; width: 93px; height: 15px; background: linear-gradient(#e1f1fb, #bddff2); border-top: 1px solid #83a9c2; border-right: 1px solid #83a9c2; color: #1c435c; font-size: 6.9px; font-weight: 600; white-space: nowrap; }
.tabicon { width: 10px; height: 9px; margin-right: 2px; }
.close { width: 7px; height: 7px; margin-left: auto; margin-right: 5px; }

.work { display: flex; height: 373px; }
.tools { display: flex; flex-direction: column; align-items: center; width: 15px; padding-top: 5.500px; background: linear-gradient(90deg, #deeffb, #b8daee); }
.tools > svg { width: 12.4px; height: 12.4px; padding: 1px; overflow: visible; }
.tools > svg use { width: 10.4px; height: 10.4px; }
.tools > .on { background: #e6ecd3; outline: 1px solid #9db8c6; outline-offset: -1px; }
.tools hr { width: 11px; height: 1px; margin: .35px 0; border: 0; background: #94b4c7; flex: none; }
.tools b { height: 12.4px; font: bold 10.5px/12.4px "Liberation Serif", serif; color: #1e3041; }
.toolgap { width: 15px; height: 19px; margin: 3px 0 3px; background: #e3f1fa; border-top: 1px dotted #94b4c7; border-bottom: 1px dotted #94b4c7; flex: none; }
.ccw { transform: scaleX(-1); } .vert { transform: rotate(90deg); }
.angle { align-self: stretch; height: 9px; background: #fff; font-size: 6px; line-height: 8px; }
.tools .wide { width: 15px; margin: 4px 0 1px; }

.side { display: flex; flex-direction: column; gap: 3px; width: 74px; padding-right: 1px; background: #aec4d0; }
.overview { width: 72px; height: 60px; border: 1px solid #638ba5; }
.devices { display: flex; flex-direction: column; width: 72px; height: 309px; border: 1px solid #4d83a5; background: #fff; font-family: "Liberation Sans", sans-serif; }
.devhead { display: flex; align-items: center; gap: 3px; height: 11.5px; padding-left: 1px; background: #b9d3e2; font-size: 6.4px; }
.devhead b { width: 9.5px; height: 9.5px; border-radius: 1px; background: #1d58ba; color: #fff; font-size: 8px; line-height: 9.5px; text-align: center; }
.devhead span { margin-left: 8px; }
.devices ul { flex: 1; margin: 0; padding: 1px 0 0; list-style: none; font-size: 6.55px; letter-spacing: -.2px; line-height: 7.58px; white-space: nowrap; }
.devices li { height: 7.58px; padding-left: 1.500px; }
.devices .sel { background: #1276cf; color: #fff; }
.scroll { display: flex; align-items: center; height: 9px; margin: 0 2px 1px; gap: 3px; background: #eef0f1; }
.scroll svg { width: 4px; height: 6px; }
.scroll div { width: 49px; height: 9px; background: #c7c8c8; }

.canvas { width: 710px; height: 373px; font-family: "Liberation Sans", sans-serif; }
.names { font-size: 17.5px; fill: #861216; }
.keys { font-size: 19px; font-weight: bold; text-anchor: middle; fill: #888a83; }
.on-c { font-size: 7.4px; font-weight: bold; fill: #f4f4e8; }
.pin { fill: none; stroke: #951a1d; stroke-width: 1.3; }
.wire { fill: none; stroke: #114f18; stroke-width: 1.3; }
.term { fill: #dddecf; stroke: #114f18; stroke-width: 1.3; }
.lab { font-size: 5.6px; fill: #222; }
.end { text-anchor: end; }
.ref { font-size: 8.7px; fill: #222; }
.pot { font-size: 4.5px; fill: #941b1e; }

.status { display: flex; gap: 3px; height: 16px; padding-left: 5px; background: #cbe3f2; }
.status > div { display: flex; align-items: center; height: 16px; background: linear-gradient(#e8f5fe, #bddbed); white-space: nowrap; }
.sim { width: 88px; }
.btn { width: 21px; height: 16px; }
.active { width: 22px; background: #bbdae9; }
.btn svg { width: 21px; height: 14px; overflow: visible; }
.active svg { width: 28px; margin-left: -6px; }
.msg { width: 54px; margin-left: -1px; padding-left: 3px; gap: 4px; border-left: 1px solid #a8c5d6; font-size: 6.4px; }
.msg svg { width: 9px; height: 9px; }
.log { width: 240px; padding-left: 6px; border-left: 1px dotted #90b0c4; font-size: 6.25px; }
.rest { width: 198px; border-left: 1px dotted #90b0c4; }
.coords { flex: 1; border-left: 1px dotted #90b0c4; }
```
